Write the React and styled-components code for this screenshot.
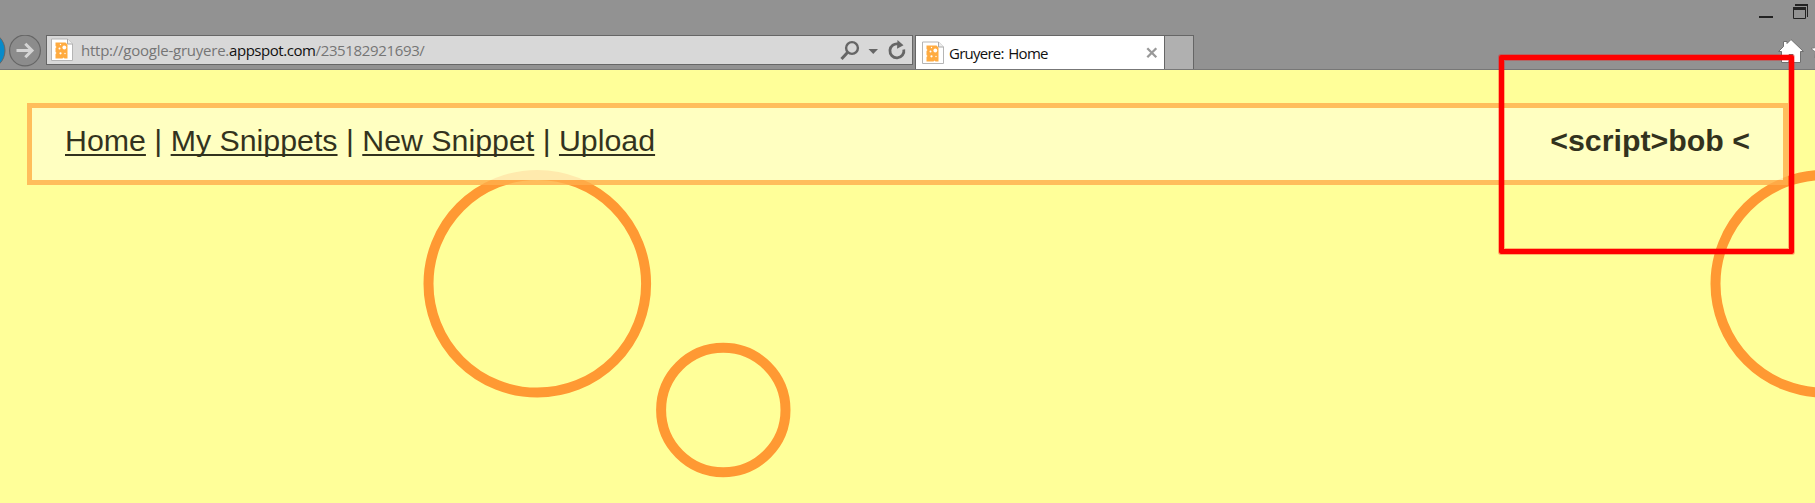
import React from "react";
import styled, { createGlobalStyle } from "styled-components";

const GlobalStyle = createGlobalStyle`
  body { margin: 0; overflow: hidden; }
  *, *::before, *::after { box-sizing: border-box; }
`;

const Window = styled.div`
  position: relative;
  width: 1815px;
  height: 503px;
  overflow: hidden;
  display: flex;
  flex-direction: column;
  background: #ffff99;
`;

const Chrome = styled.header`
  flex: none;
  height: 70px;
  background: #929292;
  border-bottom: 1px solid #777;
`;

const TitleBar = styled.div`
  display: flex;
  justify-content: flex-end;
  height: 35px;
`;

const ToolBar = styled.div`
  display: flex;
  height: 34px;
`;

const NavButtons = styled.div`
  width: 46px;
  flex: none;
`;

const AddressBar = styled.div`
  display: flex;
  align-items: center;
  width: 867px;
  height: 30px;
  padding: 0 4px 0 4px;
  background: #d8d8d8;
  border: 1px solid #666;
`;

const Url = styled.span`
  flex: 1;
  margin-left: 8px;
  font: 15px/28px "Open Sans", sans-serif;
  letter-spacing: ${(p) => p.$spacing}px;
  white-space: nowrap;
  color: #757575;
`;

const Host = styled.span`
  letter-spacing: -0.45px;
  color: #111;
`;

const UrlPath = styled.span`
  letter-spacing: -0.35px;
`;

const Tab = styled.div`
  display: flex;
  align-items: center;
  width: 250px;
  height: 34px;
  margin-left: 2px;
  padding: 0 6px 0 6px;
  background: #fff;
  border: 1px solid #666;
  border-bottom: 0;
`;

const TabTitle = styled.span`
  flex: 1;
  margin-left: 5px;
  font: 15px/32px "Open Sans", sans-serif;
  letter-spacing: -0.75px;
  word-spacing: 1.5px;
  white-space: nowrap;
  color: #111;
`;

const NewTab = styled.div`
  width: 29px;
  height: 34px;
  background: #b0b0b0;
  border: 1px solid #666;
  border-width: 1px 1px 0 0;
`;

const CommandIcons = styled.div`
  margin-left: auto;
  width: 40px;
`;

const Icon = styled.svg`
  display: block;
  flex: none;
`;

const Page = styled.main`
  position: relative;
  flex: 1;
  padding: 33px 27px 0;
`;

const Holes = styled.svg`
  position: absolute;
  left: 0;
  top: 0;
`;

const Menu = styled.nav`
  position: relative;
  display: flex;
  justify-content: space-between;
  height: 82px;
  padding: 16px 33px 0 33px;
  background: #ffffcc;
  border: 5px solid #ffaf4d;
  opacity: 0.8;
  font: 30.33px/34px "Liberation Sans", Arial, sans-serif;
  color: #000;
  white-space: pre;
`;

const MenuLink = styled.a`
  color: #000;
  text-decoration: underline;
  text-decoration-thickness: 2px;
  text-underline-offset: 3px;
  text-decoration-skip-ink: none;
`;

const UserName = styled.strong`
  font-weight: bold;
`;

const Highlight = styled.div`
  position: absolute;
  left: 1499px;
  top: 55px;
  width: 295px;
  height: 199px;
  border: 5px solid #f00;
  border-radius: 2px;
  box-shadow: 0 0 0 1px rgba(255, 0, 0, 0.3), inset 0 0 0 1px rgba(255, 0, 0, 0.3);
`;

const Favicon = () => (
  <Icon width="22" height="24" viewBox="0 0 22 24">
    <path d="M.5 1h16l5 5v16.500h-21z" fill="#fff" stroke="#b5b5b5" />
    <path d="M16.500 1v5h5" fill="#eee" stroke="#aaa" />
    <path d="M4.500 4.500h10l2 2V20.500h-3l-1-1-1 1h-7v-4.500l1-1-1-1V10l1-1-1-1z" fill="#ffab40" />
    <g fill="#fff">
      <circle cx="13.300" cy="9.500" r="1.900" />
      <circle cx="8.500" cy="10.500" r="1" />
      <circle cx="9.500" cy="6.500" r=".7" />
      <circle cx="9.500" cy="15.300" r="1.100" />
      <circle cx="14" cy="15.500" r=".7" />
    </g>
  </Icon>
);

const links = ["Home", "My Snippets", "New Snippet", "Upload"];

export default function App() {
  return (
    <Window>
      <GlobalStyle />
      <Chrome>
        <TitleBar>
          <Icon width="60" height="35" viewBox="1755 0 60 35">
            <path d="M1759 16h14v2h-14z" fill="#222" />
            <path d="M1795 4h13v13h-1V6h-12z" fill="#222" />
            <path d="M1793.500 8v10.500h12V8z" fill="none" stroke="#222" />
            <path d="M1793 7h13v3h-13z" fill="#222" />
          </Icon>
        </TitleBar>
        <ToolBar>
          <NavButtons>
            <Icon width="46" height="34" viewBox="0 35 46 34">
              <circle cx="-14" cy="50.500" r="19" fill="#078ac9" stroke="#666" />
              <circle cx="25" cy="50.500" r="15.400" fill="#8c8c8c" stroke="#666" strokeWidth="1.200" />
              <path d="M16.500 50.500h15M25.300 43.700l6.700 6.800-6.700 6.800" fill="none" stroke="#d4d4d4" strokeWidth="3" />
            </Icon>
          </NavButtons>
          <AddressBar>
            <Favicon />
            <Url $spacing={-0.24}>
              http://google-gruyere.<Host>appspot.com</Host>
              <UrlPath>/235182921693/</UrlPath>
            </Url>
            <Icon width="70" height="28" viewBox="838 36 70 28">
              <circle cx="852" cy="48" r="5.900" fill="none" stroke="#666" strokeWidth="2.400" />
              <path d="M847.500 52.500l-6 6.500" stroke="#666" strokeWidth="3" />
              <path d="M868.500 49h9.500l-4.750 5z" fill="#666" />
              <path d="M898.500 44A7 7 0 1 0 903.800 49.500" fill="none" stroke="#666" strokeWidth="2.800" />
              <path d="M897.500 40l6 5.200-6.500 3.500z" fill="#666" />
            </Icon>
          </AddressBar>
          <Tab>
            <Favicon />
            <TabTitle>Gruyere: Home</TabTitle>
            <Icon width="12" height="12" viewBox="0 0 12 12">
              <path d="M1.300 1.300l9 9M10.300 1.300l-9 9" stroke="#999" strokeWidth="2.300" />
            </Icon>
          </Tab>
          <NewTab />
          <CommandIcons>
            <Icon width="40" height="34" viewBox="1775 35 40 34">
              <path d="M1778.500 51.500l5-5V41.500h3.500v2l4-4 12.500 12h-3v11h-7.500v-8h-4v8h-7.500v-11z" fill="#fff" stroke="#707070" />
              <path d="M1811 48.500l5-1 2 5-3 5 .5-5.500z" fill="#fff" stroke="#707070" strokeWidth=".7" />
            </Icon>
          </CommandIcons>
        </ToolBar>
      </Chrome>
      <Page>
        <Holes width="1815" height="433" viewBox="0 70 1815 433">
          <g fill="none" stroke="#ff9933" strokeWidth="10">
            <circle cx="537.300" cy="283.800" r="108.800" />
            <circle cx="723.300" cy="410" r="62.200" />
            <circle cx="1824.300" cy="283.800" r="108.800" />
          </g>
        </Holes>
        <Menu>
          <span>
            {links.map((label, i) => (
              <React.Fragment key={label}>
                {i > 0 && " | "}
                <MenuLink>{label}</MenuLink>
              </React.Fragment>
            ))}
          </span>
          <UserName>{"<script>bob <"}</UserName>
        </Menu>
      </Page>
      <Highlight />
    </Window>
  );
}
